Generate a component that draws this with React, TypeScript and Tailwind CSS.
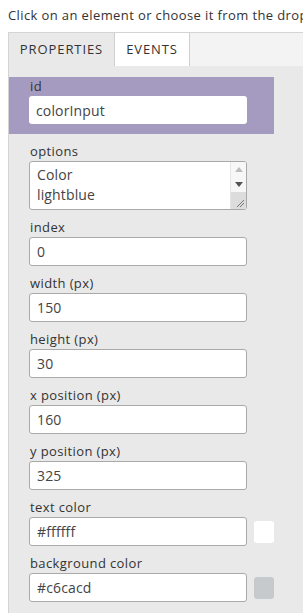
import type { ReactNode } from 'react';

const font = { fontFamily: '"Open Sans", "Liberation Sans", sans-serif' };

function Field({ label, children }: { label: string; children: ReactNode }) {
  return (
    <div className="flex flex-col">
      <div className="flex h-[27px] items-end pb-[3px] pl-[1px] text-[13px] leading-none tracking-[0.03em] text-[#333]">
        {label}
      </div>
      {children}
    </div>
  );
}

function TextBox({ value }: { value: string }) {
  return (
    <div className="flex h-[29px] w-[218px] items-center rounded-[3px] border border-[#a9a9a9] bg-white px-[7px] text-[14px] tracking-[0.01em] text-[#444]">
      {value}
    </div>
  );
}

function ColorRow({ value, swatch }: { value: string; swatch: string }) {
  return (
    <div className="flex items-center gap-[7px]">
      <TextBox value={value} />
      <div className="h-[22px] w-[20px] rounded-[3px]" style={{ backgroundColor: swatch }} />
    </div>
  );
}

export default function App() {
  return (
    <div className="h-[613px] w-[303px] overflow-hidden bg-white" style={font}>
      <div className="overflow-hidden whitespace-nowrap pl-2 pt-[7px] text-[13px] leading-[16px] tracking-[0.03em] text-[#333]">
        Click on an element or choose it from the dropdown
      </div>

      <div className="ml-2 mt-[9px] w-[400px]">
        <div className="flex h-[34px] border-t border-l border-[#d4d4d4] bg-[#f3f3f3]">
          <div className="flex w-[105px] items-center justify-center bg-[#e9e9e9] text-[13px] tracking-[0.07em] text-[#333]">
            PROPERTIES
          </div>
          <div className="flex w-[76px] items-center justify-center border-x border-[#cfcfcf] bg-white text-[13px] tracking-[0.07em] text-[#333]">
            EVENTS
          </div>
        </div>

        <div className="h-[560px] border-l border-[#d4d4d4] bg-[#e9e9e9] pt-[11px]">
          <div className="w-[265px] bg-[#a59bc0] px-5 pb-[10px]">
            <div className="flex h-[19px] items-end pb-[3px] pl-[1px] text-[13px] leading-none tracking-[0.03em] text-[#333]">
              id
            </div>
            <div className="flex h-[28px] w-[218px] items-center rounded-[3px] bg-white px-[7px] text-[14px] tracking-[0.01em] text-[#444]">
              colorInput
            </div>
          </div>

          <div className="flex flex-col pl-5">
            <Field label="options">
              <div className="flex h-[49px] w-[218px] overflow-hidden rounded-[3px] border border-[#a9a9a9] bg-white">
                <div className="flex-1 px-[7px] pt-[3px] text-[14px] leading-[20px] tracking-[0.01em] text-[#444]">
                  <div>Color</div>
                  <div>lightblue</div>
                </div>
                <div className="flex w-[16px] flex-col border-l border-[#e6e6e6] bg-[#f7f7f7]">
                  <div className="flex h-[14px] items-center justify-center">
                    <svg width="8" height="5" viewBox="0 0 8 5">
                      <path d="M0 5 L4 0 L8 5 Z" fill="#bdbdbd" />
                    </svg>
                  </div>
                  <div className="flex h-[16px] items-center justify-center">
                    <svg width="8" height="5" viewBox="0 0 8 5">
                      <path d="M0 0 L4 5 L8 0 Z" fill="#555" />
                    </svg>
                  </div>
                  <div className="flex flex-1 items-end justify-end bg-[#dcdcdc] p-[2px]">
                    <svg width="8" height="8" viewBox="0 0 8 8">
                      <path d="M1 8 L8 1 M4 8 L8 4" stroke="#777" strokeWidth="1" />
                    </svg>
                  </div>
                </div>
              </div>
            </Field>
            <Field label="index">
              <TextBox value="0" />
            </Field>
            <Field label="width (px)">
              <TextBox value="150" />
            </Field>
            <Field label="height (px)">
              <TextBox value="30" />
            </Field>
            <Field label="x position (px)">
              <TextBox value="160" />
            </Field>
            <Field label="y position (px)">
              <TextBox value="325" />
            </Field>
            <Field label="text color">
              <ColorRow value="#ffffff" swatch="#ffffff" />
            </Field>
            <Field label="background color">
              <ColorRow value="#c6cacd" swatch="#c6cacd" />
            </Field>
          </div>
        </div>
      </div>
    </div>
  );
}
